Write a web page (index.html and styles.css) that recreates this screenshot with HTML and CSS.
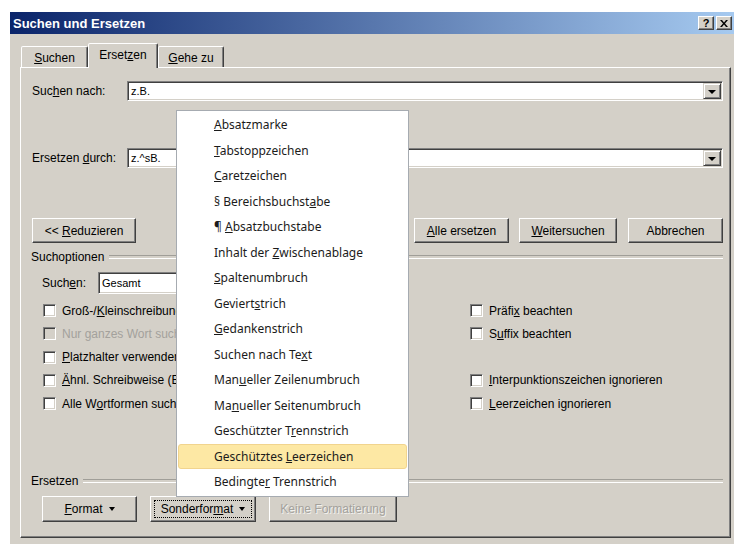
FILE: index.html
```html
<!DOCTYPE html>
<html lang="de">
<head>
<meta charset="utf-8">
<title>Suchen und Ersetzen</title>
<link rel="stylesheet" href="styles.css">
</head>
<body>
<div class="dlg">
  <div class="titlebar">
    <span class="title">Suchen und Ersetzen</span>
    <div class="tb-btns">
      <span class="tb-btn">?</span>
      <span class="tb-btn"><svg width="8" height="7" viewBox="0 0 8 7"><path d="M0 0h2l2 2.5L6 0h2L5 3.5 8 7H6L4 4.5 2 7H0l3-3.5z" fill="#000"/></svg></span>
    </div>
  </div>

  <div class="content">
    <div class="tabs">
      <div class="tab t1"><span><u>S</u>uchen</span></div>
      <div class="tab t2 active"><span>Erset<u>z</u>en</span></div>
      <div class="tab t3"><span><u>G</u>ehe zu</span></div>
    </div>

    <div class="panel">
      <div class="row">
        <label class="lbl">Suc<u>h</u>en nach:</label>
        <div class="combo"><span class="val">z.B.</span><span class="drop"><i class="tri"></i></span></div>
      </div>
      <div class="row row2">
        <label class="lbl">Ersetzen <u>d</u>urch:</label>
        <div class="combo"><span class="val">z.^sB.</span><span class="drop"><i class="tri"></i></span></div>
      </div>

      <div class="btnrow1">
        <span class="btn b-red"><span>&lt;&lt; <u>R</u>eduzieren</span></span>
        <span class="btn b-all"><span><u>A</u>lle ersetzen</span></span>
        <span class="btn b-next"><span><u>W</u>eitersuchen</span></span>
        <span class="btn b-cancel"><span>Abbrechen</span></span>
      </div>

      <div class="legend"><span>Suchoptionen</span></div>
      <div class="scope-row">
        <label class="scope-lbl">Such<u>e</u>n:</label>
        <div class="combo select"><span class="val">Gesamt</span><span class="drop"><i class="tri"></i></span></div>
      </div>

      <div class="checks">
        <div class="check"><span class="box"></span><span>Groß-/<u>K</u>leinschreibung beachten</span></div>
        <div class="check"><span class="box"></span><span>Präfi<u>x</u> beachten</span></div>
        <div class="check disabled"><span class="box"></span><span>Nur ganzes Wort suchen</span></div>
        <div class="check"><span class="box"></span><span>S<u>u</u>ffix beachten</span></div>
        <div class="check"><span class="box"></span><span><u>P</u>latzhalter verwenden</span></div>
        <div></div>
        <div class="check"><span class="box"></span><span><u>Ä</u>hnl. Schreibweise (Englisch)</span></div>
        <div class="check"><span class="box"></span><span><u>I</u>nterpunktionszeichen ignorieren</span></div>
        <div class="check"><span class="box"></span><span>Alle W<u>o</u>rtformen suchen (Englisch)</span></div>
        <div class="check"><span class="box"></span><span><u>L</u>eerzeichen ignorieren</span></div>
      </div>

      <div class="legend legend2"><span>Ersetzen</span></div>
      <div class="btnrow2">
        <span class="btn b-fmt"><span><u>F</u>ormat</span><i class="tri small"></i></span>
        <span class="btn b-spec focus"><span>Sonderfor<u>m</u>at</span><i class="tri small"></i></span>
        <span class="btn b-none disabled"><span>Keine Formatierung</span></span>
      </div>
    </div>
  </div>
</div>

<div class="menu">
  <div class="mi"><u>A</u>bsatzmarke</div>
  <div class="mi"><u>T</u>abstoppzeichen</div>
  <div class="mi"><u>C</u>aretzeichen</div>
  <div class="mi">§ Bereichsbuchst<u>a</u>be</div>
  <div class="mi">¶ <u>A</u>bsatzbuchstabe</div>
  <div class="mi">Inhalt der <u>Z</u>wischenablage</div>
  <div class="mi"><u>S</u>paltenumbruch</div>
  <div class="mi">Geviert<u>s</u>trich</div>
  <div class="mi"><u>G</u>edankenstrich</div>
  <div class="mi">Suchen nach Te<u>x</u>t</div>
  <div class="mi">Man<u>u</u>eller Zeilenumbruch</div>
  <div class="mi">Ma<u>n</u>ueller Seitenumbruch</div>
  <div class="mi">Geschützter T<u>r</u>ennstrich</div>
  <div class="mi hot">Geschütztes <u>L</u>eerzeichen</div>
  <div class="mi">Bedingte<u>r</u> Trennstrich</div>
</div>
</body>
</html>
```

FILE: styles.css
```css
* { box-sizing: border-box; }

html, body { margin: 0; }

body {
  position: relative;
  width: 734px;
  height: 544px;
  overflow: hidden;
  background: #fff;
  font-family: "Liberation Sans", Arial, sans-serif;
  font-size: 12px;
  color: #000;
}

u { text-decoration: underline; text-underline-offset: 1px; }

/* dialog window */
.dlg {
  margin: 12px 0 0 10px;
  width: 726px;
  height: 540px;
  background: #d4d0c8;
}

.titlebar {
  height: 22px;
  display: flex;
  align-items: center;
  padding: 0 4px 0 3px;
  background: linear-gradient(to right, #0a246a, #a6caf0);
}

.title {
  flex: 1;
  color: #fff;
  font-weight: bold;
  font-size: 13px;
}

.tb-btns { display: flex; gap: 2px; }

.tb-btn {
  width: 16px;
  height: 14px;
  display: flex;
  align-items: center;
  justify-content: center;
  background: #d4d0c8;
  border: 1px solid;
  border-color: #fff #404040 #404040 #fff;
  box-shadow: inset -1px -1px #808080;
  font-weight: bold;
  font-size: 11px;
  line-height: 1;
}

.content { padding: 9px 5px 0 10px; }

/* tab strip */
.tabs {
  position: relative;
  z-index: 1;
  display: flex;
  align-items: flex-end;
  height: 24px;
  padding-left: 1px;
}

.tab {
  height: 21px;
  display: flex;
  align-items: center;
  justify-content: center;
  padding-top: 1px;
  background: #d4d0c8;
  border: 1px solid;
  border-bottom: none;
  border-color: #fff #404040 transparent #fff;
  border-radius: 2px 2px 0 0;
  box-shadow: inset -1px 0 #808080;
}

.t1 { width: 67px; }
.t2 { width: 70px; }
.t3 { width: 66px; }

.tab.active {
  height: 25px;
  margin-bottom: -1px;
  padding-top: 0;
  padding-bottom: 2px;
}

.panel {
  width: 711px;
  height: 471px;
  border: 1px solid;
  border-color: #fff #404040 #404040 #fff;
  box-shadow: inset -1px -1px #808080;
  padding: 13px 7px 0 11px;
}

/* label + combo rows */
.row {
  display: flex;
  align-items: center;
  height: 20px;
}

.row2 { margin-top: 47px; }

.lbl { width: 95px; }

.combo {
  flex: 1;
  height: 20px;
  display: flex;
  align-items: center;
  background: #fff;
  border: 1px solid;
  border-color: #808080 #fff #fff #808080;
  box-shadow: inset 1px 1px #404040, inset -1px -1px #d4d0c8;
  padding: 1px 1px 1px 3px;
}

.val { flex: 1; font-size: 11px; white-space: nowrap; }

.drop {
  width: 18px;
  height: 16px;
  display: flex;
  align-items: center;
  justify-content: center;
  background: #d4d0c8;
  border: 1px solid;
  border-color: #d4d0c8 #404040 #404040 #d4d0c8;
  box-shadow: inset 1px 1px #fff, inset -1px -1px #808080;
}

.tri {
  display: inline-block;
  width: 0;
  height: 0;
  border-left: 4px solid transparent;
  border-right: 4px solid transparent;
  border-top: 4px solid #000;
  margin-top: 1px;
}

.tri.small {
  border-left-width: 3.5px;
  border-right-width: 3.5px;
  border-top-width: 4px;
  margin-left: 6px;
  margin-top: 0;
}

/* push buttons */
.btn {
  position: relative;
  height: 25px;
  display: flex;
  align-items: center;
  justify-content: center;
  background: #d4d0c8;
  border: 1px solid;
  border-color: #fff #404040 #404040 #fff;
  box-shadow: inset -1px -1px #808080;
  white-space: nowrap;
}

.btnrow1 {
  display: flex;
  margin-top: 50px;
}

.b-red { width: 104px; margin-right: auto; }
.b-all { width: 95px; }
.b-next { width: 98px; margin-left: 10px; }
.b-cancel { width: 95px; margin-left: 11px; }

/* section separators */
.legend {
  display: flex;
  align-items: center;
  height: 14px;
  margin-top: 7px;
  margin-left: -1px;
}

.legend::after {
  content: "";
  flex: 1;
  height: 2px;
  margin-left: 5px;
  border-top: 1px solid #a09e98;
  border-bottom: 1px solid #fff;
}

.legend2 { margin-top: 59px; }

.scope-row {
  display: flex;
  align-items: center;
  height: 22px;
  margin-top: 8px;
  padding-left: 10px;
}

.scope-lbl { width: 56px; }

.select { flex: none; width: 120px; height: 22px; }

/* option checkboxes */
.checks {
  display: grid;
  grid-template-columns: 427px auto;
  grid-auto-rows: 23.25px;
  margin-top: 5px;
  padding-left: 11px;
}

.check {
  display: flex;
  align-items: center;
  white-space: nowrap;
}

.box {
  flex: none;
  width: 13px;
  height: 13px;
  margin-right: 6px;
  background: #fff;
  border: 1px solid;
  border-color: #808080 #fff #fff #808080;
  box-shadow: inset 1px 1px #404040, inset -1px -1px #d4d0c8;
}

.check.disabled { color: #a3a19c; }
.check.disabled .box { background: #d4d0c8; }

.btnrow2 {
  display: flex;
  gap: 13px;
  margin-top: 8px;
  padding-left: 10px;
}

.btnrow2 .btn { height: 26px; }

.b-fmt { width: 95px; }
.b-spec { width: 106px; }
.b-none { width: 128px; }

.btn.focus::after {
  content: "";
  position: absolute;
  inset: 3px;
  border: 1px dotted #000;
}

.btn.disabled {
  color: #a3a19c;
  text-shadow: 1px 1px #f2f1ee;
}

/* special-character popup menu */
.menu {
  position: absolute;
  left: 176px;
  top: 110px;
  z-index: 5;
  width: 233px;
  padding: 1px;
  background: #fff;
  border: 1px solid #a6abb1;
  font-family: "Noto Sans", sans-serif;
  font-size: 12px;
  color: #1b1b1b;
}

.mi {
  height: 25.5px;
  line-height: 23.5px;
  padding-left: 35px;
  border: 1px solid transparent;
  border-radius: 3px;
  white-space: nowrap;
}

.mi.hot {
  background: #fde8a4;
  border-color: #f1d48e;
}
```
